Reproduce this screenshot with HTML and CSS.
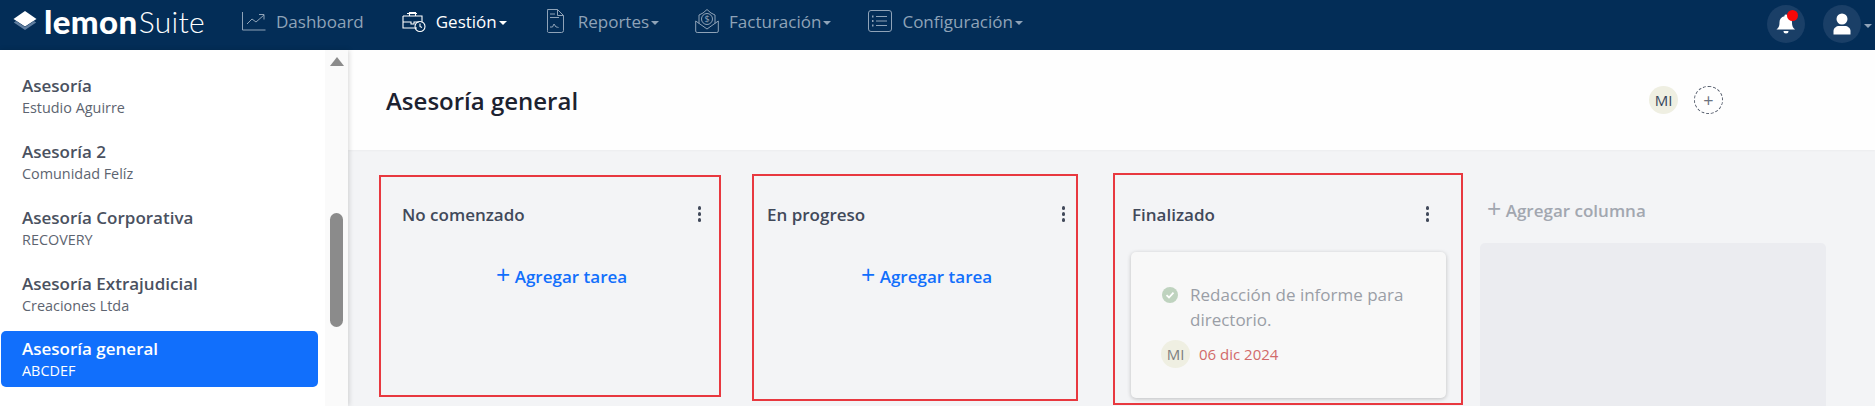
FILE: index.html
```html
<!DOCTYPE html>
<html lang="es">
<head>
<meta charset="utf-8">
<title>Asesoría general</title>
<link rel="stylesheet" href="styles.css">
</head>
<body>
<nav class="topbar">
  <a class="logo">
    <svg class="logo-mark" width="24" height="24" viewBox="0 0 24 24"><path d="M12 2 23.500 10 12 17.500 .5 10z" fill="#fff"/><path d="M.8 13.500 3 12 12 18 21 12 23.200 13.500 12 21z" fill="#5f7d9f"/></svg>
    <span class="logo-bold">lemon</span><span class="logo-light">Suite</span>
  </a>
  <a class="nav-item dim first">
    <svg class="nav-icon" width="24" height="20" viewBox="0 0 24 20" fill="none" stroke="#8fa3b8" stroke-width="1"><path d="M.5 1v18h23"/><path d="M5 13l5-5 4 3 8-7M17 3.500h5v5"/></svg>
    <span>Dashboard</span>
  </a>
  <a class="nav-item active">
    <svg class="nav-icon" width="24" height="24" viewBox="0 0 24 24" fill="none" stroke="#fff" stroke-width="1.100"><path d="M1 7h19v6.500M15 19H1V7M7.500 7V3.500h6V7M5 4.500h10M1 13h8v2h3v-2h5"/><circle cx="18" cy="17.500" r="5"/><path d="M18 14.500v3l2 1"/></svg>
    <span class="caret-text">Gestión</span><i class="caret"></i>
  </a>
  <a class="nav-item dim narrow">
    <svg class="nav-icon" width="18" height="24" viewBox="0 0 18 24" fill="none" stroke="#8fa3b8" stroke-width="1"><path d="M1.500.5h10l6 6v15a2 2 0 0 1-2 2h-13a1.500 1.500 0 0 1-1-2V2a1.500 1.500 0 0 1 1-1.500z"/><path d="M11.500.5v6h6M4 5h5M4 8.500h9M4 18h2.500l1.500-3 2 3h1.500l1 1"/></svg>
    <span class="caret-text">Reportes</span><i class="caret"></i>
  </a>
  <a class="nav-item dim bill">
    <svg class="nav-icon" width="24" height="24" viewBox="0 0 24 24" fill="none" stroke="#8fa3b8" stroke-width="1"><path d="M.7 12v10a1.500 1.500 0 0 0 1.500 1.500h19.600a1.500 1.500 0 0 0 1.500-1.500V12L12 20z"/><path d="M4 14.500V6l4-2 4-3.500 4 3.500 4 2v8.500"/><circle cx="12" cy="10" r="5.500"/><text class="icon-dollar" x="12" y="13" text-anchor="middle">$</text></svg>
    <span class="caret-text">Facturación</span><i class="caret"></i>
  </a>
  <a class="nav-item dim">
    <svg class="nav-icon" width="24" height="22" viewBox="0 0 24 22" fill="none" stroke="#8fa3b8" stroke-width="1"><rect x=".5" y=".5" width="23" height="21" rx="2.500"/><path d="M8 6.500h11M8 11h11M8 15.500h11"/><path d="M4 6.500h1.500M4 11h1.500M4 15.500h1.500" stroke-width="1.800"/></svg>
    <span class="caret-text">Configuración</span><i class="caret"></i>
  </a>
  <div class="nav-right">
    <span class="round-btn bell">
      <svg width="22" height="22" viewBox="0 0 22 22" fill="#fff"><path d="M11 1.500a1.500 1.500 0 0 1 1.500 1.700c3 .7 4.500 3.200 4.500 6 0 4 1 5.300 3 7.300H1.500c2-2 3-3.300 3-7.300 0-2.800 1.500-5.300 5-6A1.500 1.500 0 0 1 11 1.500zM8.500 18h5a2.500 2.500 0 0 1-5 0z"/></svg>
      <i class="dot"></i>
    </span>
    <span class="round-btn">
      <svg width="20" height="22" viewBox="0 0 20 22" fill="#fff"><circle cx="10" cy="6" r="5.500"/><path d="M1.500 21.500V18c0-3 3-5 5.500-5h6c2.500 0 5.500 2 5.500 5v3.500z"/></svg>
    </span>
    <i class="caret muted"></i>
  </div>
</nav>
<div class="layout">
  <aside class="sidebar">
    <ul class="project-list">
      <li class="project"><strong>Asesoría</strong><span>Estudio Aguirre</span></li>
      <li class="project"><strong>Asesoría 2</strong><span>Comunidad Felíz</span></li>
      <li class="project"><strong>Asesoría Corporativa</strong><span>RECOVERY</span></li>
      <li class="project"><strong>Asesoría Extrajudicial</strong><span>Creaciones Ltda</span></li>
      <li class="project selected"><strong>Asesoría general</strong><span>ABCDEF</span></li>
    </ul>
    <div class="scrolltrack"><i class="arrow"></i><i class="thumb"></i></div>
  </aside>
  <main class="content">
    <header class="page-head">
      <h1>Asesoría general</h1>
      <div class="members">
        <span class="avatar">MI</span>
        <span class="add-member">+</span>
      </div>
    </header>
    <section class="board">
      <div class="column col-a">
        <div class="col-head"><h2>No comenzado</h2><i class="kebab"><b></b><b></b><b></b></i></div>
        <a class="add-task"><span>+</span> Agregar tarea</a>
      </div>
      <div class="column col-b">
        <div class="col-head"><h2>En progreso</h2><i class="kebab"><b></b><b></b><b></b></i></div>
        <a class="add-task"><span>+</span> Agregar tarea</a>
      </div>
      <div class="column col-c">
        <div class="col-head"><h2>Finalizado</h2><i class="kebab"><b></b><b></b><b></b></i></div>
        <article class="card">
          <div class="card-title">
            <svg class="check" width="16" height="16" viewBox="0 0 16 16"><circle cx="8" cy="8" r="8" fill="#bfd3bf"/><path d="M4.500 8.200 7 10.500l4.500-4.800" fill="none" stroke="#fff" stroke-width="1.800"/></svg>
            <p>Redacción de informe para directorio.</p>
          </div>
          <div class="card-foot"><span class="avatar faded">MI</span><span class="due">06 dic 2024</span></div>
        </article>
      </div>
      <div class="new-col">
        <a class="add-col"><span>+</span> Agregar columna</a>
        <div class="ghost"></div>
      </div>
    </section>
  </main>
</div>
</body>
</html>
```
FILE: styles.css
```css
* { box-sizing: border-box; }
html, body { margin: 0; height: 406px; overflow: hidden; }
body { font-family: "Open Sans", "Liberation Sans", sans-serif; background: #f3f4f6; color: #3f4756; }
h1, h2, p, ul { margin: 0; padding: 0; }
i { display: block; font-style: normal; }

.topbar { height: 50px; background: #032d57; display: flex; align-items: center; padding: 0 0 8px 13px; }
.logo { display: flex; align-items: center; color: #fff; width: 229px; }
.logo-mark { margin-right: 7px; }
.logo-bold { font-family: Lato, sans-serif; font-weight: 900; font-size: 33px; letter-spacing: .4px; }
.logo-light { font-family: Lato, sans-serif; font-weight: 300; font-size: 30px; margin-left: 1px; letter-spacing: .3px; }
.nav-item { display: flex; align-items: center; font-size: 17px; margin-right: 38px; }
.nav-icon { margin-right: 10px; flex: none; }
.nav-item.dim { color: #8fa3b8; }
.nav-item.active { color: #fff; }
.nav-item.narrow { margin-left: 1px; margin-right: 36px; }
.nav-item.bill { margin-right: 37px; }
.nav-item.narrow .nav-icon { margin-right: 14px; }
.icon-dollar { font: 9px "Open Sans", sans-serif; fill: #8fa3b8; stroke: none; }
.caret { width: 0; height: 0; border: 4px solid transparent; border-top-color: currentColor; border-bottom: 0; margin-left: 2px; margin-top: 3px; }
.caret.muted { color: #8fa3b8; margin-left: 3px; }
.nav-right { margin-left: auto; display: flex; align-items: center; gap: 18px; padding-right: 3px; margin-top: 6px; }
.nav-right .caret { margin-left: -15px; }
.round-btn { position: relative; width: 38px; height: 38px; border-radius: 50%; background: #1a3f67; display: flex; align-items: center; justify-content: center; }
.dot { position: absolute; top: 5px; left: 20px; width: 11px; height: 11px; border-radius: 50%; background: #f80808; }

.layout { display: flex; height: 356px; }
.sidebar { width: 348px; flex: none; background: #fff; display: flex; box-shadow: 1px 0 5px rgba(0,0,0,.16); position: relative; z-index: 2; }
.project-list { list-style: none; width: 325px; padding: 17px 7px 0 1px; }
.project { height: 56px; margin-bottom: 10px; padding: 7.500px 0 0 21px; border-radius: 5px; display: flex; flex-direction: column; }
.project strong { font-size: 17px; font-weight: 600; line-height: 22px; color: #4a5160; }
.project span { font-size: 14.400px; line-height: 22px; color: #5d6470; }
.project.selected { padding-top: 6.500px; background: #116ffc; }
.project.selected strong, .project.selected span { color: #fff; }
.scrolltrack { width: 23px; background: #fafafa; display: flex; flex-direction: column; align-items: center; }
.arrow { width: 0; height: 0; border: 7px solid transparent; border-bottom: 9px solid #8b8b8b; border-top: 0; margin-top: 7px; }
.thumb { width: 13px; height: 114px; border-radius: 7px; background: #8b8b8b; margin-top: 147px; }

.content { flex: 1; min-width: 0; }
.page-head { height: 100px; background: #fefefe; display: flex; align-items: center; padding-left: 38px; box-shadow: 0 1px 2px rgba(0,0,0,.03); }
.page-head h1 { font-size: 24px; font-weight: 600; color: #1c2230; width: 1263px; }
.members { display: flex; align-items: center; gap: 16px; }
.avatar { width: 29px; height: 28px; border-radius: 50%; background: #efefe2; font-size: 15px; display: flex; align-items: center; justify-content: center; color: #35465c; }
.add-member { width: 29px; height: 28px; border-radius: 50%; border: 1px dashed #555d6c; display: flex; align-items: center; justify-content: center; color: #6b7280; font-size: 18px; line-height: 1; }

.board { display: flex; padding-left: 31px; }
.column { border: 2px solid #e8383f; flex: none; }
.col-a { width: 342px; height: 222px; margin-top: 25px; padding: 0 14px 0 21px; }
.col-b { width: 326px; height: 227px; margin: 24px 0 0 31px; padding: 0 7px 0 13px; }
.col-c { width: 350px; height: 232px; margin: 23px 0 0 35px; padding: 0 28px 0 17px; }
.col-head { display: flex; justify-content: space-between; align-items: center; height: 30px; margin-top: 22px; }
.col-b .col-head { margin-top: 23px; }
.col-c .col-head { margin-top: 24px; }
.col-head h2 { font-size: 17px; font-weight: 600; color: #41495a; }
.kebab { display: flex; flex-direction: column; gap: 2.500px; padding-right: 4px; }
.kebab b { width: 3.500px; height: 3.500px; border-radius: 50%; background: #41495a; }
.add-task { display: block; margin-top: 35px; color: #116ffc; font-size: 17px; font-weight: 600; }
.add-task span { font-weight: 400; font-size: 25px; line-height: 20px; vertical-align: -1px; }
.col-a .add-task { margin-left: 94px; }
.col-b .add-task { margin-left: 94px; }
.card { width: 315px; height: 146px; margin-top: 23px; background: #f8f8f8; border-radius: 5px; box-shadow: 0 1px 4px rgba(0,0,0,.22); padding: 30px 30px 0 31px; margin-left: -1px; }
.card-title { display: flex; gap: 12px; }
.check { margin-top: 5px; flex: none; }
.card-title p { font-size: 17px; line-height: 25px; color: #9a9ea6; }
.card-foot { display: flex; align-items: center; gap: 9px; margin-top: 8px; margin-left: -1px; }
.avatar.faded { color: #7e8180; }
.due { font-size: 15px; color: #d16a6a; }
.new-col { width: 346px; margin-left: 17px; padding-top: 48px; }
.add-col { display: block; color: #a2a7b0; font-size: 17px; font-weight: 600; padding-left: 7px; line-height: 24px; }
.add-col span { font-weight: 400; font-size: 25px; line-height: 20px; vertical-align: -1px; }
.ghost { height: 180px; margin-top: 20px; background: #ebecf0; border-radius: 5px 5px 0 0; }
```
